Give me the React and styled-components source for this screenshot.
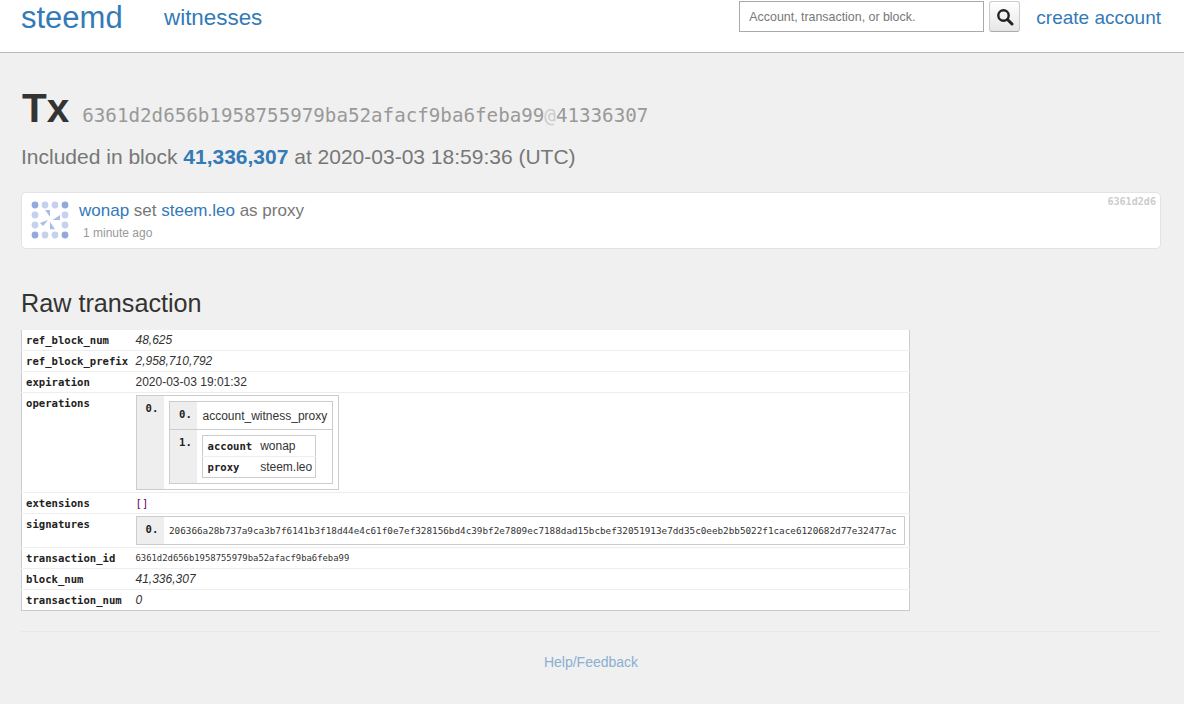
import React from 'react';
import styled, { createGlobalStyle } from 'styled-components';

const MONO = `"DejaVu Sans Mono", "Liberation Mono", monospace`;

const Global = createGlobalStyle`
  html, body { margin: 0; padding: 0; }
  body {
    background: #f0f0f0;
    color: #333;
    font-family: "Liberation Sans", Arial, sans-serif;
    font-size: 14px;
    line-height: 20px;
  }
  * { box-sizing: border-box; }
`;

const Navbar = styled.nav`
  height: 53px;
  background: #fff;
  border-bottom: 1px solid #bbb;
  display: flex;
  align-items: flex-start;
  padding: 0 23px 0 21px;
`;

const Brand = styled.a`
  color: #337ab7;
  font-size: 31px;
  line-height: 35px;
  width: 143px;
`;

const NavLink = styled.a`
  color: #337ab7;
  font-size: 22.4px;
  line-height: 35px;
`;

const SearchForm = styled.form`
  margin-left: auto;
  display: flex;
  padding-top: 1px;
  gap: 5px;
`;

const SearchInput = styled.input`
  width: 245px;
  height: 31px;
  border: 1px solid #aaa;
  padding: 0 9px;
  font: 12.4px "Liberation Sans", sans-serif;
  background: #fff;
  outline: none;
  &::placeholder { color: #777; opacity: 1; }
`;

const SearchButton = styled.button`
  width: 31px;
  height: 31px;
  padding: 0;
  border: 1px solid #ccc;
  border-bottom-color: #aaa;
  border-radius: 3px;
  background: linear-gradient(#fff, #e6e6e6);
  display: flex;
  align-items: center;
  justify-content: center;
`;

const CreateLink = styled(NavLink)`
  font-size: 19px;
  margin-left: 11px;
  line-height: 33px;
`;

const Main = styled.main`
  padding: 32px 23px 0 21px;
`;

const Title = styled.h1`
  margin: 0;
  padding-left: 1px;
  font-size: 40.5px;
  line-height: 46px;
  font-weight: 700;
  color: #333;
  display: flex;
  align-items: baseline;
  gap: 13px;
`;

const Hash = styled.small`
  font-family: ${MONO};
  font-size: 19.2px;
  font-weight: 400;
  color: #999;
  span { color: #ccc; }
`;

const Included = styled.h4`
  margin: 6px 0 0;
  font-size: 21px;
  line-height: 24px;
  font-weight: 400;
  color: #777;
  a { color: #337ab7; font-weight: 700; }
`;

const OpCard = styled.div`
  margin-top: 23px;
  height: 57px;
  background: #fff;
  border: 1px solid #e3e3e3;
  border-radius: 5px;
  display: flex;
  position: relative;
  padding: 7px 9px;
  gap: 8px;
`;

const Avatar = styled.svg`
  width: 40px;
  height: 40px;
  flex: none;
`;

const OpBody = styled.div`
  display: flex;
  flex-direction: column;
`;

const OpText = styled.div`
  font-size: 17px;
  line-height: 22px;
  color: #777;
  a { color: #337ab7; }
`;

const OpTime = styled.div`
  font-size: 12px;
  line-height: 20px;
  color: #999;
  margin: 1px 0 0 4px;
`;

const ShortHash = styled.span`
  position: absolute;
  top: 2px;
  right: 4px;
  font-family: ${MONO};
  font-weight: 700;
  font-size: 10.1px;
  line-height: 14px;
  color: #ccc;
`;

const SectionTitle = styled.h3`
  margin: 40px 0 13px;
  font-size: 25.2px;
  line-height: 28px;
  font-weight: 400;
  color: #333;
`;

const RawTable = styled.table`
  width: 889px;
  border-collapse: collapse;
  background: #fff;
  border-left: 1px solid #ccc;
  border-right: 1px solid #ccc;
  border-bottom: 1px solid #ccc;
  font-size: 12px;
  line-height: 16px;
  table-layout: fixed;
`;

const Row = styled.tr`
  border-top: ${p => (p.$first ? 'none' : '1px solid #eee')};
`;

const Key = styled.th`
  width: 110px;
  padding: 2px 4px;
  text-align: left;
  vertical-align: top;
  font-family: ${MONO};
  font-weight: 700;
  font-size: 10.6px;
  color: #222;
  white-space: nowrap;
`;

const Val = styled.td`
  padding: 2px 4px;
  vertical-align: top;
  color: #333;
  font-style: ${p => (p.$num ? 'italic' : 'normal')};
`;

const SmallMono = styled.span`
  display: block;
  font-family: ${MONO};
  font-size: ${p => p.$size || '8.9px'};
  line-height: 16px;
  white-space: nowrap;
`;

const Brackets = styled.span`
  font-family: ${MONO};
  font-size: 10.6px;
  color: #606;
`;

const Nested = styled.table`
  border-collapse: collapse;
  border: 1px solid #ccc;
  background: #fff;
  font-size: 12px;
  line-height: 16px;
  width: ${p => p.$width || 'auto'};
`;

const NestedRow = styled.tr`
  border-top: ${p => (p.$first ? 'none' : '1px solid #ccc')};
`;

const Index = styled.td`
  width: ${p => p.$width || '28px'};
  background: #eee;
  padding: 4px 0 0 9px;
  vertical-align: top;
  font-family: ${MONO};
  font-size: 10.6px;
  color: #222;
  font-weight: 700;
`;

const Cell = styled.td`
  padding: ${p => p.$pad || '5px'};
  vertical-align: top;
  white-space: nowrap;
`;

const KvRow = styled.tr`
  border-top: ${p => (p.$first ? 'none' : '1px solid #eee')};
`;

const KvKey = styled.td`
  padding: 2px 8px 2px 5px;
  font-family: ${MONO};
  font-size: 10.6px;
  color: #222;
  font-weight: 700;
`;

const KvVal = styled.td`
  padding: 2px 3px 2px 0;
  white-space: nowrap;
`;

const Footer = styled.footer`
  margin-top: 20px;
  border-top: 1px solid #e8e8e8;
  padding-top: 20px;
  text-align: center;
  a { color: #8aafd0; }
`;

const dots = [
  [4, 5, '#93a8dd'], [14, 5, '#c5d1ef'], [24, 5, '#c5d1ef'], [34, 5, '#93a8dd'],
  [4, 15, '#c5d1ef'], [34, 15, '#c5d1ef'],
  [4, 25, '#c5d1ef'], [34, 25, '#c5d1ef'],
  [4, 35, '#93a8dd'], [14, 35, '#c5d1ef'], [24, 35, '#c5d1ef'], [34, 35, '#93a8dd'],
];

const Identicon = () => (
  <Avatar viewBox="0 0 40 40">
    {dots.map(([x, y, c]) => <circle key={`${x}-${y}`} cx={x} cy={y} r="3.4" fill={c} />)}
    <path d="M14 10 L19 10 L19 16.7 Z" fill="#a9bbe8" />
    <path d="M29 15 L29 20 L21.7 20 Z" fill="#a9bbe8" />
    <path d="M19 21.7 L19 29.3 L24 29.3 Z" fill="#a9bbe8" />
    <path d="M9 23 L17 20 L12 26 Z" fill="#a9bbe8" />
  </Avatar>
);

const SIG = '206366a28b737a9ca3b7f6141b3f18d44e4c61f0e7ef328156bd4c39bf2e7809ec7188dad15bcbef32051913e7dd35c0eeb2bb5022f1cace6120682d77e32477ac';

const App = () => (
  <>
    <Global />
    <Navbar>
      <Brand>steemd</Brand>
      <NavLink>witnesses</NavLink>
      <SearchForm>
        <SearchInput placeholder="Account, transaction, or block." />
        <SearchButton type="button">
          <svg width="18" height="18" viewBox="0 0 18 18">
            <circle cx="7.5" cy="7.5" r="5.2" fill="none" stroke="#222" strokeWidth="2.4" />
            <path d="M11.5 11.5 L16 16" stroke="#222" strokeWidth="3" strokeLinecap="round" />
          </svg>
        </SearchButton>
        <CreateLink>create account</CreateLink>
      </SearchForm>
    </Navbar>
    <Main>
      <Title>Tx <Hash>6361d2d656b1958755979ba52afacf9ba6feba99<span>@</span>41336307</Hash></Title>
      <Included>Included in block <a>41,336,307</a> at 2020-03-03 18:59:36 (UTC)</Included>
      <OpCard>
        <Identicon />
        <OpBody>
          <OpText><a>wonap</a> set <a>steem.leo</a> as proxy</OpText>
          <OpTime>1 minute ago</OpTime>
        </OpBody>
        <ShortHash>6361d2d6</ShortHash>
      </OpCard>
      <SectionTitle>Raw transaction</SectionTitle>
      <RawTable>
        <tbody>
          <Row $first><Key>ref_block_num</Key><Val $num>48,625</Val></Row>
          <Row><Key>ref_block_prefix</Key><Val $num>2,958,710,792</Val></Row>
          <Row><Key>expiration</Key><Val>2020-03-03 19:01:32</Val></Row>
          <Row>
            <Key>operations</Key>
            <Val>
              <Nested>
                <tbody>
                  <NestedRow $first>
                    <Index>0.</Index>
                    <Cell>
                      <Nested>
                        <tbody>
                          <NestedRow $first>
                            <Index $width="27px">0.</Index>
                            <Cell $pad="6px 5px 5px 6px">account_witness_proxy</Cell>
                          </NestedRow>
                          <NestedRow>
                            <Index $width="27px">1.</Index>
                            <Cell>
                              <Nested $width="113px">
                                <tbody>
                                  <KvRow $first><KvKey>account</KvKey><KvVal>wonap</KvVal></KvRow>
                                  <KvRow><KvKey>proxy</KvKey><KvVal>steem.leo</KvVal></KvRow>
                                </tbody>
                              </Nested>
                            </Cell>
                          </NestedRow>
                        </tbody>
                      </Nested>
                    </Cell>
                  </NestedRow>
                </tbody>
              </Nested>
            </Val>
          </Row>
          <Row><Key>extensions</Key><Val><Brackets>[]</Brackets></Val></Row>
          <Row>
            <Key>signatures</Key>
            <Val>
              <Nested $width="769px">
                <tbody>
                  <NestedRow $first>
                    <Index>0.</Index>
                    <Cell $pad="6px 5px 5px"><SmallMono $size="9.3px">{SIG}</SmallMono></Cell>
                  </NestedRow>
                </tbody>
              </Nested>
            </Val>
          </Row>
          <Row><Key>transaction_id</Key><Val><SmallMono>6361d2d656b1958755979ba52afacf9ba6feba99</SmallMono></Val></Row>
          <Row><Key>block_num</Key><Val $num>41,336,307</Val></Row>
          <Row><Key>transaction_num</Key><Val $num>0</Val></Row>
        </tbody>
      </RawTable>
      <Footer><a>Help/Feedback</a></Footer>
    </Main>
  </>
);

export default App;
